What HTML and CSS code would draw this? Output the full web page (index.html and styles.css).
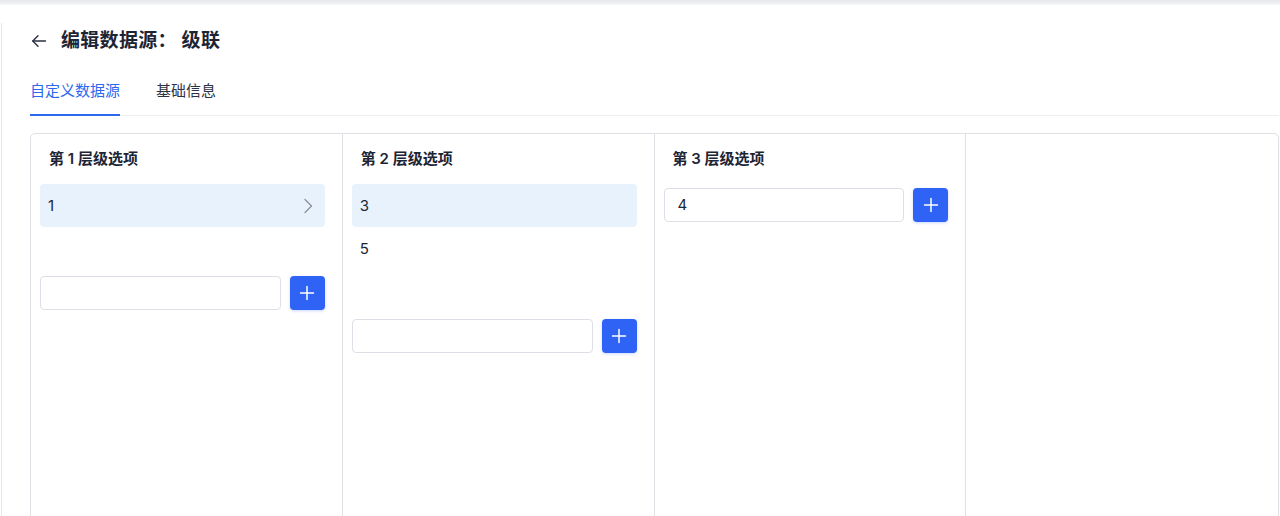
FILE: index.html
```html
<!DOCTYPE html>
<html lang="zh-CN">
<head>
<meta charset="utf-8">
<title>编辑数据源</title>
<link rel="stylesheet" href="styles.css">
</head>
<body>
<div class="topbar"></div>
<div class="page">
  <div class="header">
    <span class="back">
      <svg width="16" height="16" viewBox="0 0 16 16" fill="none" stroke="#2a3142" stroke-width="1.4" stroke-linecap="round" stroke-linejoin="round"><path d="M14.5 8H1.8"/><path d="M7 2.8L1.8 8L7 13.2"/></svg>
    </span>
    <h1 class="title">编辑数据源：&nbsp;级联</h1>
  </div>
  <div class="tabs">
    <div class="tab active">自定义数据源</div>
    <div class="tab">基础信息</div>
  </div>
  <div class="panel">
    <div class="col">
      <div class="col-title">第 1 层级选项</div>
      <div class="options">
        <div class="option selected"><span>1</span>
          <svg class="chev" width="10" height="16" viewBox="0 0 10 16" fill="none" stroke="#8b909a" stroke-width="1.3" stroke-linecap="round" stroke-linejoin="round"><path d="M2 1.5L8.5 8L2 14.5"/></svg>
        </div>
      </div>
      <div class="add-row">
        <div class="input"></div>
        <button class="add-btn"><svg width="16" height="16" viewBox="0 0 16 16" stroke="#fff" stroke-width="1.5" stroke-linecap="round"><path d="M8 1.5v13M1.5 8h13"/></svg></button>
      </div>
    </div>
    <div class="col">
      <div class="col-title">第 2 层级选项</div>
      <div class="options">
        <div class="option selected"><span>3</span></div>
        <div class="option"><span>5</span></div>
      </div>
      <div class="add-row">
        <div class="input"></div>
        <button class="add-btn"><svg width="16" height="16" viewBox="0 0 16 16" stroke="#fff" stroke-width="1.5" stroke-linecap="round"><path d="M8 1.5v13M1.5 8h13"/></svg></button>
      </div>
    </div>
    <div class="col">
      <div class="col-title">第 3 层级选项</div>
      <div class="add-row first">
        <div class="input">4</div>
        <button class="add-btn"><svg width="16" height="16" viewBox="0 0 16 16" stroke="#fff" stroke-width="1.5" stroke-linecap="round"><path d="M8 1.5v13M1.5 8h13"/></svg></button>
      </div>
    </div>
    <div class="col"></div>
  </div>
</div>
</body>
</html>
```
FILE: styles.css
```css
* { box-sizing: border-box; }
html, body {
  margin: 0;
  padding: 0;
  background: #fff;
  font-family: Inter, "Noto Sans CJK SC", sans-serif;
  color: #1e2536;
  overflow: hidden;
}
.topbar {
  height: 5px;
  background: linear-gradient(#e6e7e9, #f0f1f3 70%, #fafafa);
}
.page {
  margin-left: 1px;
  border-left: 1px solid #e6e8ef;
  padding: 0 1px 0 28px;
  height: 511px;
}
.header {
  display: flex;
  align-items: center;
  height: 36px;
  margin-top: 18px;
}
.back {
  display: flex;
  align-items: center;
  width: 16px;
  height: 16px;
  margin-left: 1px;
}
.title {
  margin: 0 0 0 14px;
  font-size: 19px;
  font-weight: 700;
  line-height: 36px;
  color: #1d2434;
  letter-spacing: 0.3px;
}
.tabs {
  display: flex;
  gap: 36px;
  margin-top: 20px;
  border-bottom: 1px solid #eceef2;
}
.tab {
  font-size: 15px;
  line-height: 24px;
  padding-bottom: 11px;
  color: #2c3344;
  border-bottom: 2px solid transparent;
  margin-bottom: -1px;
}
.tab.active {
  color: #2c68ee;
  border-bottom-color: #2c68ee;
}
.panel {
  margin-top: 17px;
  border: 1px solid #dfe1e6;
  border-radius: 5px;
  display: grid;
  grid-template-columns: repeat(4, 1fr);
  height: 420px;
}
.col {
  border-right: 1px solid #dfe1e6;
  padding: 14px 17px 0 9px;
}
.col:last-child { border-right: none; }
.col-title {
  font-size: 15px;
  font-weight: 600;
  line-height: 22px;
  padding-left: 9px;
  margin-bottom: 14px;
  color: #1d2434;
}
.options {
  margin-bottom: 49px;
}
.option {
  height: 43px;
  display: flex;
  align-items: center;
  justify-content: space-between;
  padding: 0 12px 0 8px;
  font-size: 15px;
  border-radius: 4px;
  color: #1e2536;
}
.option.selected {
  background: #e8f2fd;
}
.chev { display: block; }
.add-row {
  display: flex;
  gap: 9px;
}
.add-row.first {
  margin-top: 18px;
}
.input {
  flex: 1;
  height: 34px;
  border: 1px solid #dcdfe5;
  border-radius: 4px;
  font-size: 15px;
  line-height: 32px;
  padding-left: 13px;
  color: #1e2536;
}
.add-btn {
  width: 35px;
  height: 34px;
  border: none;
  border-radius: 4px;
  background: #2f63f5;
  display: flex;
  align-items: center;
  justify-content: center;
  padding: 0;
  box-shadow: 0 1px 3px rgba(47, 99, 245, 0.25);
}
```
